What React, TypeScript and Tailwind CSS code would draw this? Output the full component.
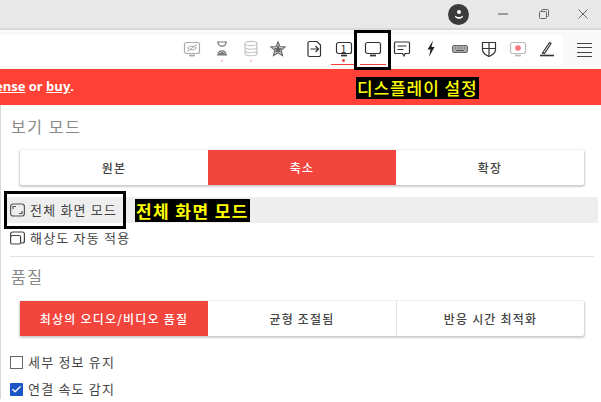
import type { ReactNode } from "react";
import { Check } from "lucide-react";

const FONT = "font-['Noto_Sans_CJK_KR','Noto_Sans',sans-serif]";

// Toolbar glyphs, each drawn in a 20x20 box
const Ico = ({ children, className = "text-[#333]" }: { children: ReactNode; className?: string }) => (
  <svg width="20" height="20" viewBox="0 0 20 20" fill="none" stroke="currentColor" strokeWidth="1.2" className={className}>
    {children}
  </svg>
);

const Screen = () => (
  <>
    <rect x="2.5" y="3.5" width="15" height="11" rx="2" />
    <path d="M7 16.5h6" strokeWidth="1.8" />
  </>
);

function ToolBtn({ children, line, dot, faintDot }: { children: ReactNode; line?: boolean; dot?: boolean; faintDot?: boolean }) {
  return (
    <div className="relative flex h-[30px] w-[29px] items-center justify-center pb-[2px]">
      {children}
      {dot && <span className="absolute bottom-[3px] h-[3px] w-[3px] rounded-full bg-[#f44336]" />}
      {faintDot && <span className="absolute bottom-[3px] h-[2px] w-[2px] rounded-full bg-[#f9b4ae]" />}
      {line && <span className="absolute bottom-0 left-[2px] h-[1px] w-[26px] bg-[#f44336]" />}
    </div>
  );
}

function Segments({ items, active }: { items: string[]; active: number }) {
  return (
    <div className="ml-[19px] grid h-[35px] w-[564px] grid-cols-3 rounded-[2px] bg-white shadow-[0_1px_2px_1px_rgba(0,0,0,0.2)]">
      {items.map((label, i) => (
        <div
          key={label}
          className={`flex items-center justify-center text-[12px] font-medium tracking-[1.2px] ${
            i === active ? "bg-[#f1453d] text-[#fff]" : "text-[#444]"
          } ${i > 0 && i !== active && i - 1 !== active ? "border-l border-[#e2e2e2]" : ""}`}
        >
          {label}
        </div>
      ))}
    </div>
  );
}

export default function App() {
  return (
    <div className={`${FONT} relative h-[402px] w-[601px] overflow-hidden bg-white`}>
      {/* title bar */}
      <div className="flex h-[30px] items-center justify-end border-b-2 border-[#d9d9d9] bg-[#e8e8e8] text-[#555]">
        <div className="mr-[29px] flex h-[21px] w-[21px] items-center justify-center rounded-full bg-[#3b3b3b]">
          <svg width="10" height="11" viewBox="0 0 10 11" fill="white">
            <circle cx="5" cy="3" r="2" />
            <path d="M1.5 6.500C3 8.500 7 8.500 8.500 6.500L9 7.800C7 10.500 3 10.500 1 7.800Z" />
          </svg>
        </div>
        <svg width="10" height="10" viewBox="0 0 10 10" className="mr-[31px]" stroke="#666" strokeWidth="1.2">
          <path d="M0 5h10" />
        </svg>
        <svg width="10" height="10" viewBox="0 0 10 10" fill="none" className="mr-[29px]" stroke="#666" strokeWidth="1">
          <rect x="0.5" y="2.5" width="7" height="7" rx="1" />
          <path d="M2.5 2.5V1.5a1 1 0 0 1 1-1h5a1 1 0 0 1 1 1v5a1 1 0 0 1-1 1h-1" />
        </svg>
        <svg width="10" height="10" viewBox="0 0 10 10" className="mr-[13px]" stroke="#666" strokeWidth="1">
          <path d="M0.5 0.5l9 9M9.5 0.5l-9 9" />
        </svg>
      </div>

      {/* toolbar */}
      <div className="flex h-[39px] items-center bg-[#f9f9f9] pt-[1px]">
        <div className="flex h-[30px] w-[563px] items-center justify-end bg-white pr-[2px]">
          <div className="mr-[1px]">
            <ToolBtn>
              <Ico className="text-[#aaa]">
                <Screen />
                <path d="M5.500 9q4.500-4 9 0q-4.500 4-9 0M5 12.500L15 5.500" strokeWidth="1" />
              </Ico>
            </ToolBtn>
          </div>
          <ToolBtn faintDot>
            <Ico className="text-[#777]">
              <path d="M5 3h10M5 16h10M6 3c0 5.500 8 5.500 8 0M6 16c0-5.500 8-5.500 8 0" />
              <path d="M7 15.500q3-4 6 0z" fill="currentColor" />
            </Ico>
          </ToolBtn>
          <ToolBtn faintDot>
            <Ico className="text-[#c4c4c4]">
              <ellipse cx="10" cy="4.500" rx="6" ry="2.200" />
              <path d="M4 4.500v10c0 3 12 3 12 0v-10M4 8c0 3 12 3 12 0M4 11.500c0 3 12 3 12 0" />
            </Ico>
          </ToolBtn>
          <div className="mr-[9px] flex w-[26px] justify-center pb-[2px]">
            <Ico className="text-[#666]">
              <path d="M10 3l2 4.700 5 .4-3.800 3.300 1.200 5-4.400-2.700-4.400 2.700 1.200-5L3 8.100l5-.4z" />
              <path d="M10 7l1 2.300 2 .2-1.500 1.500.5 2-2-1-2 1 .5-2L7 9.500l2-.2z" fill="currentColor" />
            </Ico>
          </div>
          <ToolBtn>
            <Ico>
              <path d="M4.500 2.500h7.500l3.500 3.500v10a1.500 1.500 0 0 1-1.500 1.500h-9.500a1.500 1.500 0 0 1-1.500-1.500v-12a1.500 1.500 0 0 1 1.500-1.500z" />
              <path d="M5.500 10h8M10.500 7l3 3-3 3" />
            </Ico>
          </ToolBtn>
          <ToolBtn line dot>
            <div className="relative flex items-center justify-center">
              <Ico>
                <Screen />
              </Ico>
              <span className="absolute top-[3px] text-[10px] leading-[13px] text-[#222]">1</span>
            </div>
          </ToolBtn>
          <ToolBtn line>
            <Ico>
              <Screen />
            </Ico>
          </ToolBtn>
          <ToolBtn>
            <Ico>
              <path d="M3.500 3h13a1 1 0 0 1 1 1v9.500a1 1 0 0 1-1 1H13l-1 2.500-1.500-2.500H3.500a1 1 0 0 1-1-1V4a1 1 0 0 1 1-1z" />
              <path d="M5.500 7h9M5.500 10.500h6" />
            </Ico>
          </ToolBtn>
          <ToolBtn>
            <Ico className="text-[#222]">
              <path d="M12 1.500L6.500 10.500h3L8 18l5.500-10h-3z" fill="currentColor" stroke="none" />
            </Ico>
          </ToolBtn>
          <ToolBtn>
            <Ico className="text-[#666]">
              <rect x="2.500" y="6.500" width="15" height="7" rx="1.500" fill="#aaa" strokeWidth="1" />
              <path d="M5 9h1M8 9h1M11 9h1M14 9h1M6 11.500h8" stroke="#555" />
            </Ico>
          </ToolBtn>
          <ToolBtn>
            <Ico>
              <path d="M3.500 3.500h13v7c0 3.500-3 5.500-6.500 7-3.500-1.500-6.500-3.500-6.500-7z" />
              <path d="M10 3.500v14M3.500 9.500h13" />
            </Ico>
          </ToolBtn>
          <ToolBtn>
            <Ico className="text-[#bbb]">
              <Screen />
              <circle cx="10" cy="9" r="2.800" fill="#f6787a" stroke="none" />
            </Ico>
          </ToolBtn>
          <ToolBtn>
            <Ico>
              <path d="M5.500 14L12.500 3.500l1.500 1L7.500 14.500z" />
              <path d="M3 16.500h14" strokeWidth="1.600" />
            </Ico>
          </ToolBtn>
        </div>
        <div className="ml-[14px] flex h-[14px] w-[15px] flex-col justify-between">
          <span className="h-[1px] bg-[#444]" />
          <span className="h-[1px] bg-[#444]" />
          <span className="h-[1px] bg-[#444]" />
          <span className="h-[1px] bg-[#444]" />
        </div>
      </div>

      {/* licence banner */}
      <div className="flex h-[36px] items-center overflow-hidden bg-[#ff4136]">
        <div className="flex w-[74px] shrink-0 justify-end whitespace-nowrap font-['Open_Sans',sans-serif] text-[13px] font-bold text-white">
          <span>
            <span className="underline">license</span> or <span className="underline">buy</span>.
          </span>
        </div>
      </div>

      {/* settings panel */}
      <div className="border-l border-[#d8d8d8] pt-[11px]">
        <h2 className="ml-[10px] h-[20px] text-[16px] leading-[20px] font-normal tracking-[1.6px] text-[#888]">보기 모드</h2>
        <div className="h-[14px]" />
        <Segments items={["원본", "축소", "확장"]} active={1} />

        <div className="mt-[12px] ml-[4px] flex h-[26px] w-[593px] items-center gap-[5px] rounded-[2px] bg-[#eeeeee] pl-[5px] text-[13px] tracking-[1.2px] text-[#444]">
          <svg width="15" height="14" viewBox="0 0 15 14" fill="none" stroke="#555" strokeWidth="1.2">
            <rect x="0.600" y="1" width="13.800" height="12" rx="2.500" />
            <path d="M3 6V3.500h3M12 8v2.500H9" />
          </svg>
          전체 화면 모드
        </div>
        <div className="ml-[9px] flex h-[30px] items-center gap-[5px] text-[13px] tracking-[1.2px] text-[#444]">
          <svg width="15" height="14" viewBox="0 0 15 14" fill="none" stroke="#444" strokeWidth="1.2">
            <rect x="0.600" y="4.500" width="10" height="8.500" rx="1.500" />
            <path d="M0.600 6V3a2 2 0 0 1 2-2h9.800a2 2 0 0 1 2 2v7a2 2 0 0 1-2 2h-1.800" />
          </svg>
          해상도 자동 적용
        </div>
        <div className="mt-[3px] ml-[9px] h-[1px] w-[584px] bg-[#e2e2e2]" />

        <h2 className="mt-[9px] ml-[10px] h-[20px] text-[16px] leading-[20px] font-normal tracking-[1.6px] text-[#888]">품질</h2>
        <div className="h-[15px]" />
        <Segments items={["최상의 오디오/비디오 품질", "균형 조절됨", "반응 시간 최적화"]} active={0} />

        <label className="mt-[16px] ml-[9px] flex h-[20px] items-center gap-[5px] text-[13px] tracking-[1.2px] text-[#444]">
          <span className="h-[13px] w-[13px] border border-[#666] bg-white" />
          세부 정보 유지
        </label>
        <label className="mt-[7px] ml-[9px] flex h-[20px] items-center gap-[5px] text-[13px] tracking-[1.2px] text-[#444]">
          <span className="flex h-[13px] w-[13px] items-center justify-center rounded-[1px] bg-[#1a56c4]">
            <Check size={11} color="white" strokeWidth={3} />
          </span>
          연결 속도 감지
        </label>
      </div>

      {/* tutorial annotations over the UI */}
      <div className="absolute top-[30px] left-[354px] h-[40px] w-[37px] border-[3px] border-black" />
      <div className="absolute top-[77px] left-[356px] bg-black px-[1px] text-[17px] leading-[22px] font-medium tracking-[0.9px] whitespace-nowrap text-[#ffff00]">
        디스플레이 설정
      </div>
      <div className="absolute top-[191px] left-[4px] h-[38px] w-[122px] border-[3px] border-black" />
      <div className="absolute top-[199px] left-[135px] bg-black px-[1px] text-[17px] leading-[23px] font-bold tracking-[1.4px] whitespace-nowrap text-[#ffff00]">
        전체 화면 모드
      </div>
    </div>
  );
}
